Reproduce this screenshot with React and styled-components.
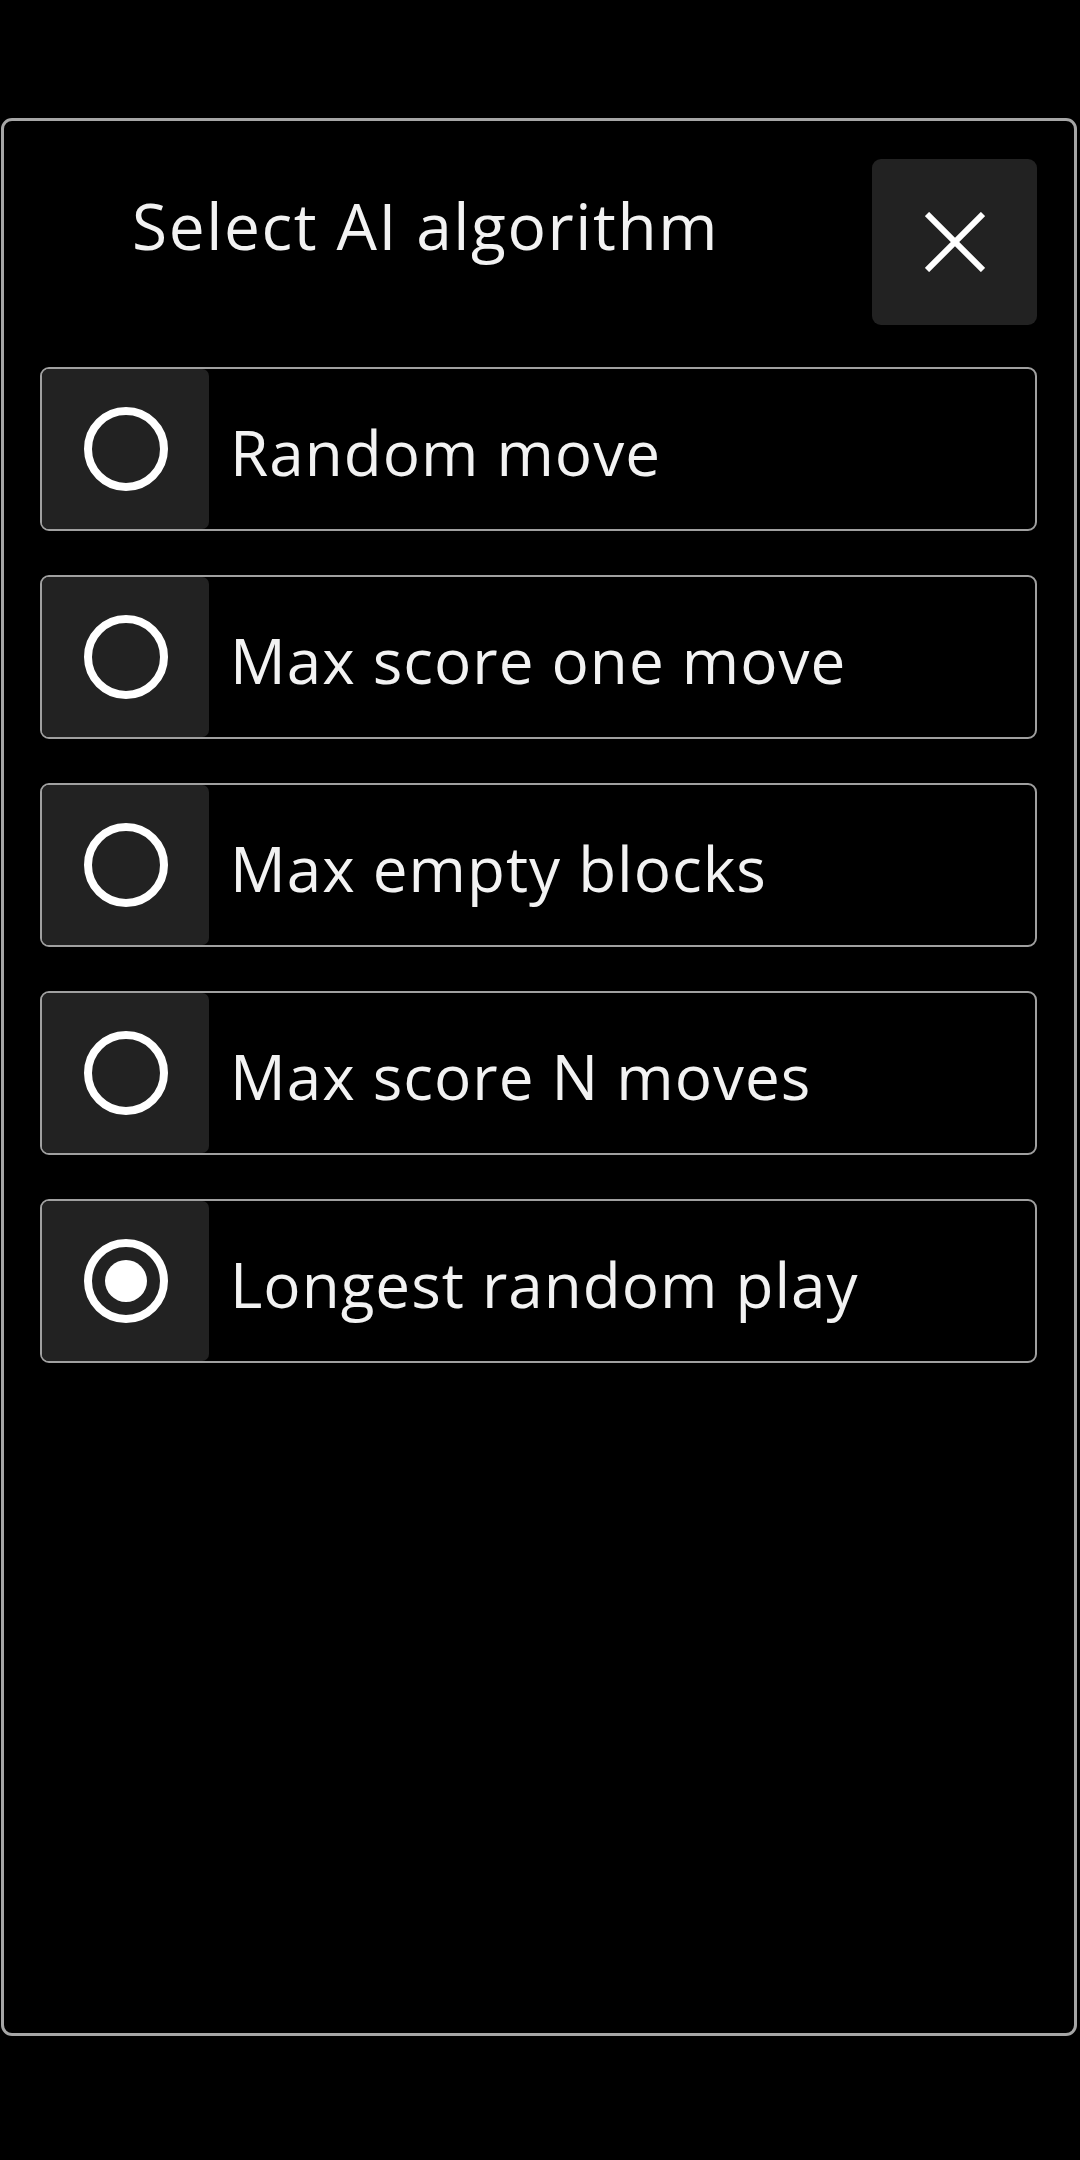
import React, { useState } from 'react';
import styled, { createGlobalStyle } from 'styled-components';

const GlobalStyle = createGlobalStyle`
  html, body {
    margin: 0;
    padding: 0;
    background: #000;
  }
  body {
    font-family: "Open Sans", "Noto Sans", sans-serif;
    color: #f2f2f2;
  }
`;

const Panel = styled.div`
  box-sizing: border-box;
  margin: 118px 0 0 1px;
  width: 1076px;
  height: 1918px;
  border: 3px solid #a6a6a6;
  border-radius: 11px;
  padding: 38px 37px 0 36px;
  display: flex;
  flex-direction: column;
  gap: 42px;
`;

const Header = styled.div`
  display: flex;
  justify-content: space-between;
  align-items: flex-start;
`;

const Title = styled.h1`
  margin: 35px 0 0 92px;
  font-size: 64px;
  font-weight: 400;
  line-height: 1;
  letter-spacing: 1.6px;
`;

const CloseButton = styled.button`
  width: 165px;
  height: 166px;
  border: none;
  border-radius: 9px;
  background: #222;
  display: flex;
  align-items: center;
  justify-content: center;
  padding: 0;
  cursor: pointer;
`;

const List = styled.div`
  display: flex;
  flex-direction: column;
  gap: 44px;
`;

const Option = styled.label`
  box-sizing: border-box;
  height: 164px;
  border: 2.5px solid #a0a0a0;
  border-radius: 9px;
  display: flex;
  align-items: center;
  gap: 21px;
  cursor: pointer;
`;

const RadioBox = styled.div`
  width: 167px;
  align-self: stretch;
  background: #222;
  border-radius: 7px;
  display: flex;
  align-items: center;
  justify-content: center;
`;

const Radio = styled.span`
  box-sizing: border-box;
  width: 84px;
  height: 84px;
  border: 8px solid #fff;
  border-radius: 50%;
  display: flex;
  align-items: center;
  justify-content: center;

  &::after {
    content: '';
    width: 42px;
    height: 42px;
    border-radius: 50%;
    background: #fff;
    display: ${({ $checked }) => ($checked ? 'block' : 'none')};
  }
`;

const Label = styled.span`
  font-size: 62px;
  line-height: 1;
  letter-spacing: 1px;
  margin-top: 6px;
`;

const algorithms = [
  'Random move',
  'Max score one move',
  'Max empty blocks',
  'Max score N moves',
  'Longest random play',
];

const CloseIcon = () => (
  <svg width="60" height="60" viewBox="0 0 60 60">
    <path d="M2 2 L58 58 M58 2 L2 58" stroke="#fff" strokeWidth="6" />
  </svg>
);

const App = () => {
  const [selected, setSelected] = useState(4);

  return (
    <>
      <GlobalStyle />
      <Panel>
        <Header>
          <Title>Select AI algorithm</Title>
          <CloseButton aria-label="Close">
            <CloseIcon />
          </CloseButton>
        </Header>
        <List>
          {algorithms.map((name, i) => (
            <Option key={name} onClick={() => setSelected(i)}>
              <RadioBox>
                <Radio $checked={selected === i} />
              </RadioBox>
              <Label>{name}</Label>
            </Option>
          ))}
        </List>
      </Panel>
    </>
  );
};

export default App;
